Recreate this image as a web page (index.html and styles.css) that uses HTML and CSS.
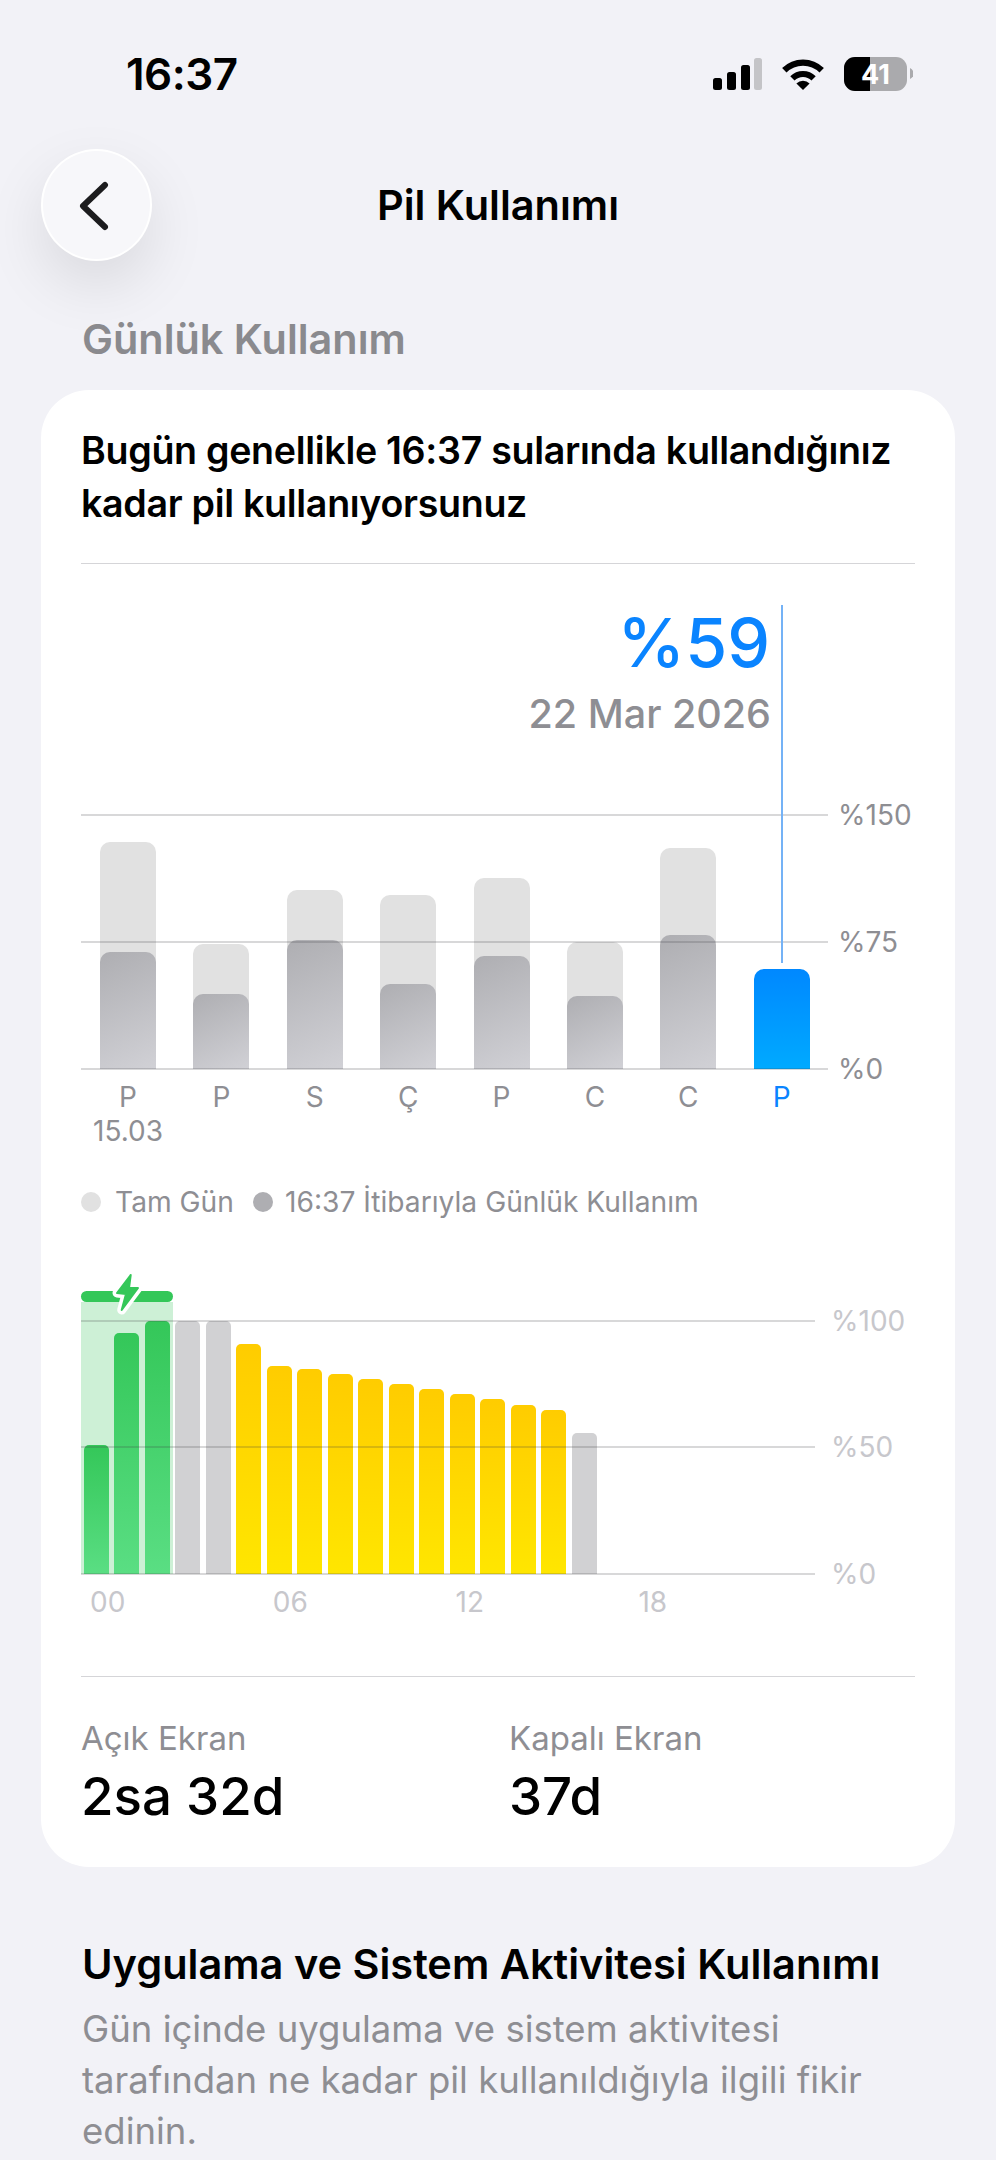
FILE: index.html

```html
<!DOCTYPE html>
<html lang="tr">
<head>
  <meta charset="UTF-8" />
  <meta name="viewport" content="width=device-width, initial-scale=1.0"/>
  <title>Pil Kullanımı</title>
  <link rel="stylesheet" href="styles.css">
</head>
<body>
  <div class="status">
    <span class="clock">16:37</span>
    <div class="status-icons">
      <svg class="signal" width="49" height="32" viewBox="0 0 49 32">
        <rect x="0" y="20" width="9" height="12" rx="2.5"/>
        <rect x="14" y="14" width="9" height="18" rx="2.5"/>
        <rect x="28" y="7" width="9" height="25" rx="2.5"/>
        <rect class="signal-off" x="41" y="0" width="8" height="32" rx="2.5"/>
      </svg>
      <svg class="wifi" width="42" height="32" viewBox="0 0 42 32">
        <path d="M2.3 12.3a26.5 26.5 0 0 1 37.4 0" fill="none" stroke="#000" stroke-width="6.2"/>
        <path d="M10.4 20.4a15 15 0 0 1 21.2 0" fill="none" stroke="#000" stroke-width="6"/>
        <path d="M21 32l-6.6-6.6a9.3 9.3 0 0 1 13.2 0z"/>
      </svg>
      <svg class="battery" width="69" height="34" viewBox="0 0 69 34">
        <rect class="battery-rest" x="0" y="0" width="63" height="34" rx="11"/>
        <path d="M11 0h15v34h-15a11 11 0 0 1-11-11v-12a11 11 0 0 1 11-11z"/>
        <path class="battery-rest" d="M66 11a6 6 0 0 1 0 11z"/>
        <text class="battery-text" x="31.5" y="27" text-anchor="middle">41</text>
      </svg>
    </div>
  </div>

  <div class="nav">
    <div class="back">
      <svg width="32" height="52" viewBox="0 0 32 52">
        <path d="M27 6L5 27l22 21" fill="none" stroke="#1c1c1e" stroke-width="6" stroke-linecap="round" stroke-linejoin="round"/>
      </svg>
    </div>
    <div class="nav-title">Pil Kullanımı</div>
  </div>

  <h2 class="section-title">Günlük Kullanım</h2>

  <div class="card">
    <div class="headline">Bugün genellikle 16:37 sularında kullandığınız kadar pil kullanıyorsunuz</div>
    <div class="divider headline-divider"></div>

    <div class="readout">
      <div class="readout-value">%59</div>
      <div class="readout-date">22 Mar 2026</div>
    </div>

    <div class="plot week-plot">
      <div class="week-bars">
        <div class="week-bar"><div class="full" style="height:227px"></div><div class="part" style="height:117px"></div></div>
        <div class="week-bar"><div class="full" style="height:125px"></div><div class="part" style="height:75px"></div></div>
        <div class="week-bar"><div class="full" style="height:179px"></div><div class="part" style="height:129px"></div></div>
        <div class="week-bar"><div class="full" style="height:174px"></div><div class="part" style="height:85px"></div></div>
        <div class="week-bar"><div class="full" style="height:191px"></div><div class="part" style="height:113px"></div></div>
        <div class="week-bar"><div class="full" style="height:127px"></div><div class="part" style="height:73px"></div></div>
        <div class="week-bar"><div class="full" style="height:221px"></div><div class="part" style="height:134px"></div></div>
        <div class="week-bar"><div class="today" style="height:100px"></div></div>
      </div>
      <div class="grid-row grid-top"><i></i><span>%150</span></div>
      <div class="grid-row grid-mid"><i></i><span>%75</span></div>
      <div class="grid-row grid-base"><i></i><span>%0</span></div>
      <div class="today-line"></div>
    </div>

    <div class="week-labels">
      <div class="day">P<span>15.03</span></div>
      <div class="day">P</div>
      <div class="day">S</div>
      <div class="day">Ç</div>
      <div class="day">P</div>
      <div class="day">C</div>
      <div class="day">C</div>
      <div class="day day-now">P</div>
    </div>

    <div class="legend">
      <span class="dot dot-full"></span><span class="legend-text">Tam Gün</span>
      <span class="dot dot-part"></span><span class="legend-text">16:37 İtibarıyla Günlük Kullanım</span>
    </div>

    <div class="plot day-plot">
      <div class="charging"></div>
      <div class="day-bars">
        <div class="hour green" style="height:129px"></div>
        <div class="hour green" style="height:241px"></div>
        <div class="hour green" style="height:253px"></div>
        <div class="hour gray" style="height:253px"></div>
        <div class="hour gray" style="height:253px"></div>
        <div class="hour yellow" style="height:230px"></div>
        <div class="hour yellow" style="height:208px"></div>
        <div class="hour yellow" style="height:205px"></div>
        <div class="hour yellow" style="height:200px"></div>
        <div class="hour yellow" style="height:195px"></div>
        <div class="hour yellow" style="height:190px"></div>
        <div class="hour yellow" style="height:185px"></div>
        <div class="hour yellow" style="height:180px"></div>
        <div class="hour yellow" style="height:175px"></div>
        <div class="hour yellow" style="height:169px"></div>
        <div class="hour yellow" style="height:164px"></div>
        <div class="hour gray" style="height:141px"></div>
      </div>
      <div class="grid-row day-top"><i></i><span>%100</span></div>
      <div class="grid-row day-mid"><i></i><span>%50</span></div>
      <div class="grid-row day-base"><i></i><span>%0</span></div>
      <svg class="bolt" width="40" height="50" viewBox="0 0 40 50">
        <path class="bolt-edge" d="M25.700 5L12 23l9 1-4.300 16L33 18l-9 0z"/>
        <path class="bolt-fill" d="M25.700 5L12 23l9 1-4.300 16L33 18l-9 0z"/>
      </svg>
    </div>

    <div class="hour-labels">
      <span>00</span><span>06</span><span>12</span><span>18</span>
    </div>

    <div class="divider stats-divider"></div>

    <div class="stats">
      <div class="stat">
        <div class="stat-label">Açık Ekran</div>
        <div class="stat-value">2sa 32d</div>
      </div>
      <div class="stat">
        <div class="stat-label">Kapalı Ekran</div>
        <div class="stat-value">37d</div>
      </div>
    </div>
  </div>

  <div class="activity">
    <h3>Uygulama ve Sistem Aktivitesi Kullanımı</h3>
    <p>Gün içinde uygulama ve sistem aktivitesi tarafından ne kadar pil kullanıldığıyla ilgili fikir edinin.</p>
  </div>
</body>
</html>
```

FILE: styles.css

```css
* { box-sizing: border-box; }
html, body { margin: 0; padding: 0; }
body { width: 996px; height: 2160px; overflow: hidden; background: #f2f2f7; font-family: Inter, "Noto Sans", sans-serif; color: #000; padding-top: 54px; }

.status { display: flex; justify-content: space-between; align-items: center; height: 40px; padding: 0 83px 0 126px; }
.clock { font-size: 44px; font-weight: 600; letter-spacing: -0.5px; }
.status-icons { display: flex; align-items: center; gap: 20px; }
.signal-off { fill: #c4c4c7; }
.battery-rest { fill: #aaaaad; }
.battery-text { fill: #fff; font-size: 27px; font-weight: 700; }

.nav { display: grid; grid-template-columns: 111px 1fr 111px; align-items: center; margin-top: 55px; padding: 0 41px; }
.back { width: 111px; height: 112px; border-radius: 50%; background: #f7f7fa; border: 2px solid #fff; box-shadow: 0 24px 60px rgba(0,0,0,0.1); display: flex; align-items: center; justify-content: center; padding-right: 6px; }
.nav-title { text-align: center; font-size: 41.500px; font-weight: 600; }

.section-title { margin: 55px 0 28px 82px; font-size: 41.400px; line-height: 46px; font-weight: 600; color: #8a8a8e; }

.card { margin: 0 41px; padding: 34px 40px 43px; background: #fff; border-radius: 48px; }
.headline { font-size: 37.600px; line-height: 53px; font-weight: 600; letter-spacing: -0.3px; }
.divider { height: 1px; background: #d5d5d8; }
.headline-divider { margin-top: 33px; }

.readout { margin-top: 42px; margin-right: 144px; text-align: right; }
.readout-value { font-size: 68px; line-height: 72px; font-weight: 500; color: #0a84ff; padding-right: 1px; }
.readout-date { font-size: 39.500px; line-height: 72px; font-weight: 500; color: #8e8e93; }

.plot { position: relative; }
.week-plot { height: 254px; margin-top: 65px; }
.week-bars { display: flex; align-items: flex-end; gap: 37.400px; height: 100%; padding-left: 19px; }
.week-bar { position: relative; width: 56px; height: 100%; }
.full { position: absolute; left: 0; right: 0; bottom: 0; background: #e1e1e1; border-radius: 10px 10px 0 0; }
.part { position: absolute; left: 0; right: 0; bottom: 0; background: linear-gradient(155deg, #aeaeb2, #d1d1d6); border-radius: 10px 10px 0 0; }
.today { position: absolute; left: 0; right: 0; bottom: 0; background: linear-gradient(#0088ff, #00aaff); border-radius: 10px 10px 0 0; }
.today-line { position: absolute; left: 700px; top: -210px; width: 2px; height: 358px; background: #74b2f6; }

.grid-row { position: absolute; left: 0; display: flex; align-items: center; height: 34px; margin-top: -17px; font-size: 28px; color: #8e8e93; }
.grid-row i { display: block; height: 2px; background: rgba(60,60,67,0.2); }
.week-plot .grid-row i { width: 747px; }
.week-plot .grid-row span { margin-left: 10px; }
.grid-top { top: 0; }
.grid-mid { top: 127px; }
.grid-base { top: 254px; }

.week-labels { display: flex; gap: 37.400px; margin-top: 11px; padding-left: 19px; }
.day { display: flex; flex-direction: column; align-items: center; width: 56px; font-size: 28px; line-height: 34px; color: #8e8e93; white-space: nowrap; }
.day-now { color: #0a84ff; }

.legend { display: flex; align-items: center; margin-top: 37px; font-size: 28.200px; line-height: 34px; color: #8e8e93; }
.dot { width: 20px; height: 20px; border-radius: 50%; margin-right: 14px; }
.dot-full { background: #e1e1e1; }
.dot-part { background: #aeaeb2; margin-left: 19px; margin-right: 12px; }

.day-plot { height: 253px; margin-top: 102px; }
.charging { position: absolute; left: 0; top: -19px; bottom: 0; width: 92px; background: #cdf0d6; }
.charging::before { content: ""; position: absolute; left: 0; right: 0; top: -11px; height: 11px; background: #34c759; border-radius: 6px; }
.bolt { position: absolute; left: 24px; top: -51px; overflow: visible; }
.bolt-edge { fill: #fff; stroke: #fff; stroke-width: 9; stroke-linejoin: round; }
.bolt-fill { fill: #34c759; stroke: #34c759; stroke-width: 2; stroke-linejoin: round; }
.day-bars { position: relative; display: flex; align-items: flex-end; gap: 5.470px; height: 100%; padding-left: 3px; }
.hour { width: 25px; border-radius: 5px 5px 0 0; }
.green { background: linear-gradient(#34c759, #5ade83); }
.gray { background: #d1d1d3; }
.yellow { background: linear-gradient(#ffcc00, #ffe600); }
.day-plot .grid-row { color: #c7c7cc; }
.day-plot .grid-row i { width: 734px; }
.day-plot .grid-row span { margin-left: 16px; }
.day-top { top: 0; }
.day-mid { top: 126px; }
.day-base { top: 253px; }

.hour-labels { display: flex; margin-top: 11px; padding-left: 9px; font-size: 28px; line-height: 34px; color: #c7c7cc; }
.hour-labels span { width: 182.800px; }

.stats-divider { margin-top: 57px; }
.stats { display: flex; margin-top: 41px; }
.stat { flex: 0 0 428px; }
.stat-label { font-size: 33px; line-height: 40px; color: #8e8e93; }
.stat-value { margin-top: 10px; font-size: 52.800px; line-height: 56px; font-weight: 500; }

.activity { margin: 74px 82px 0; }
.activity h3 { margin: 0; font-size: 41.500px; line-height: 46px; font-weight: 600; }
.activity p { margin: 17px 0 0; font-size: 36.500px; line-height: 51px; color: #8e8e93; }
```
